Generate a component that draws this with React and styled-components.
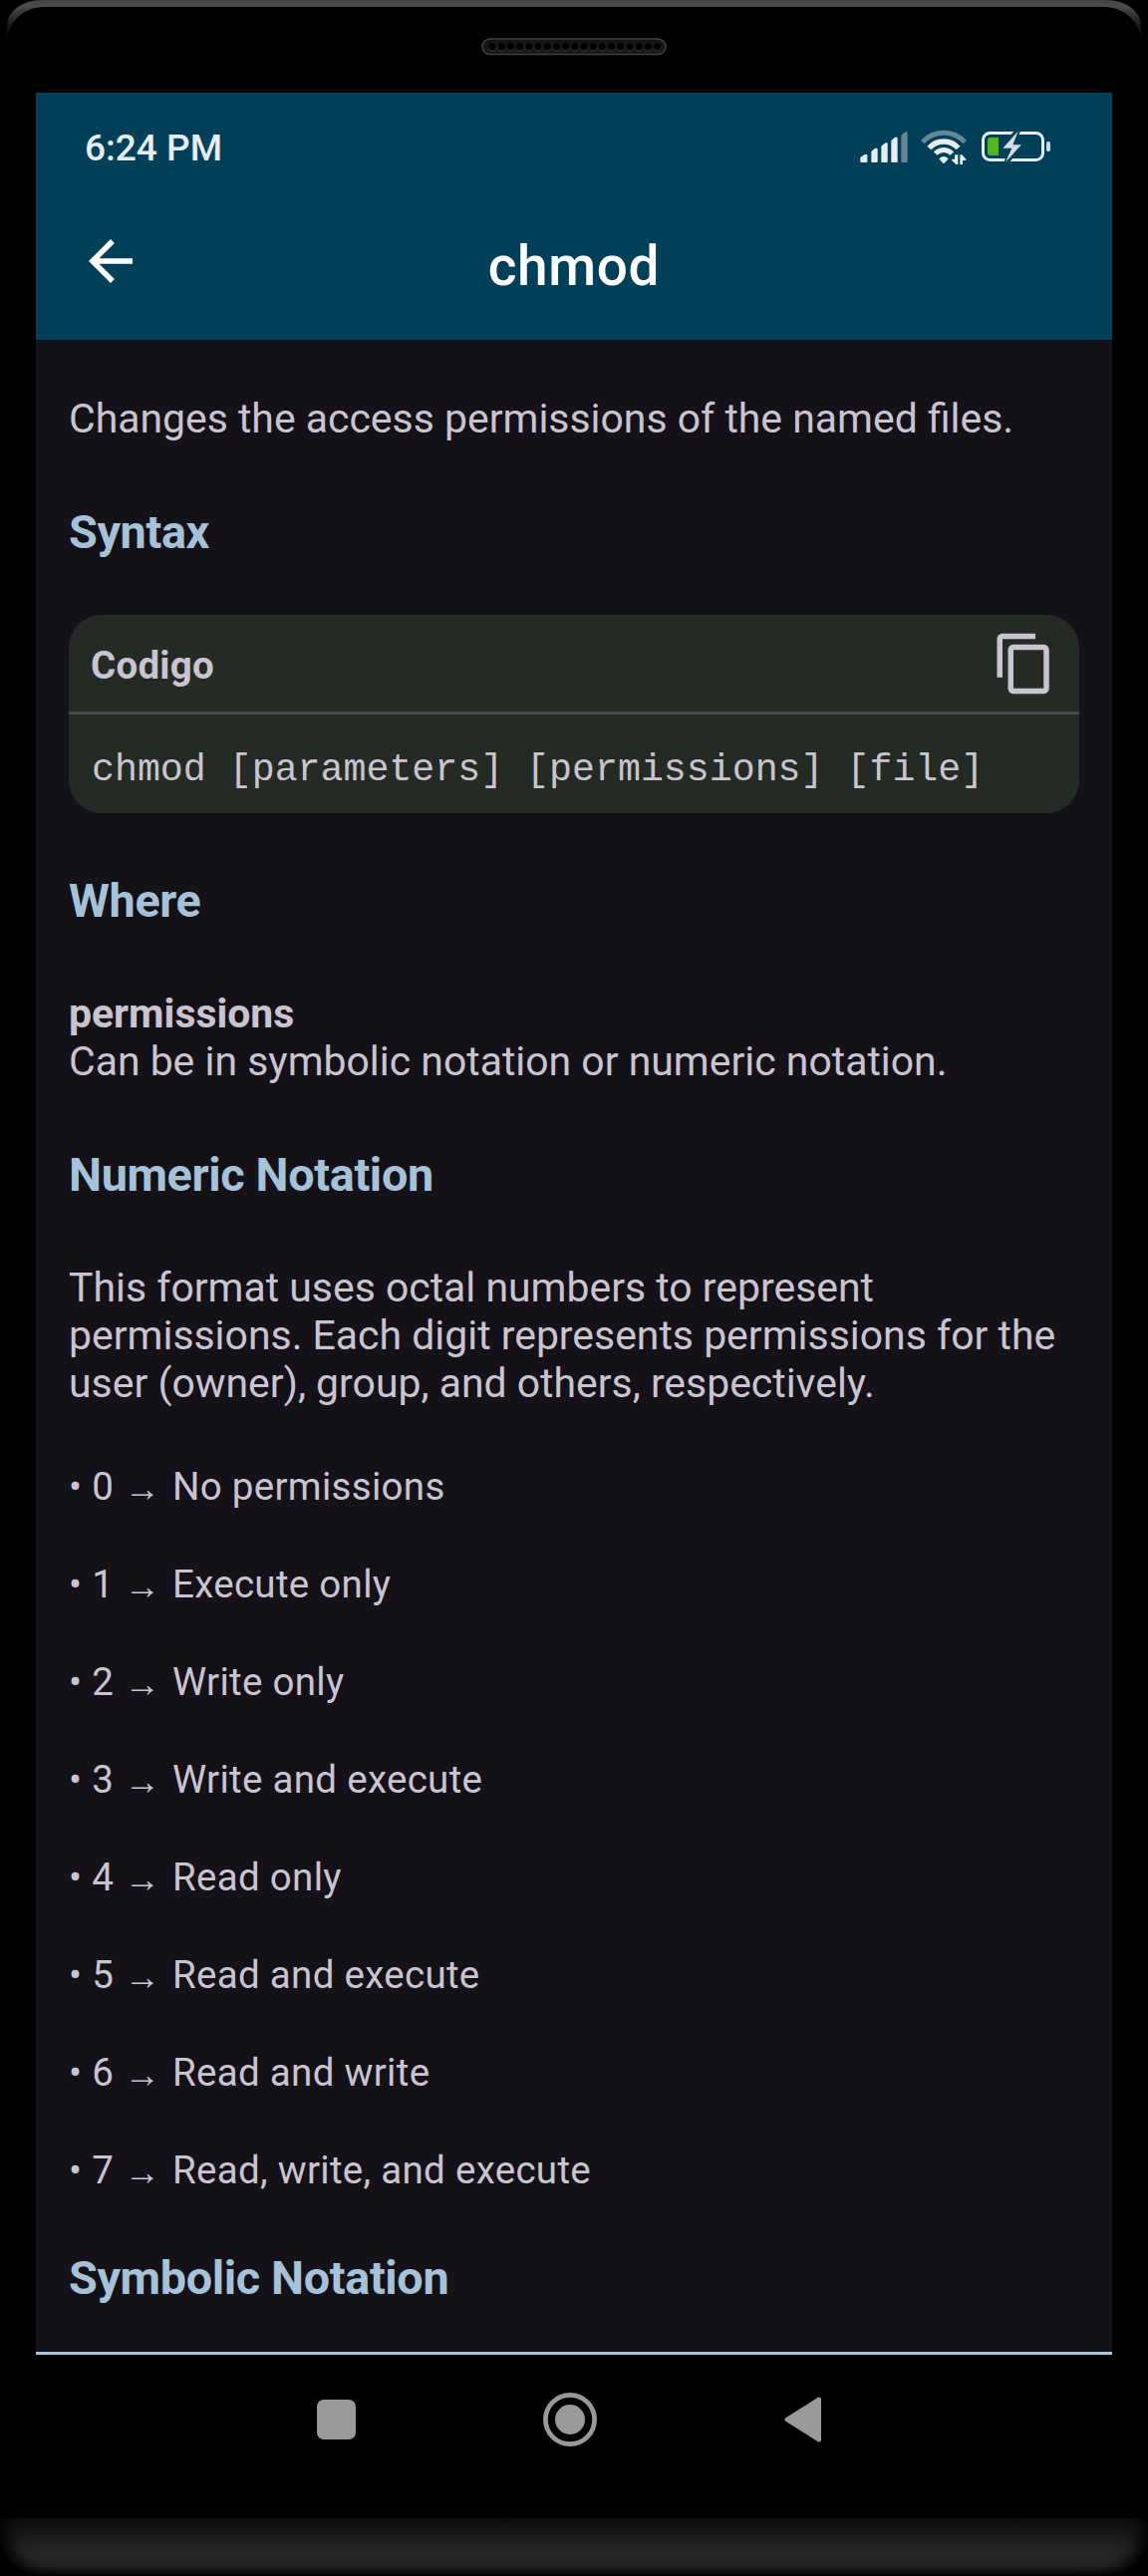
import React from "react";
import styled, { createGlobalStyle } from "styled-components";

const GlobalStyle = createGlobalStyle`
  * { box-sizing: border-box; }
  body {
    margin: 0;
    background: #000;
    font-family: Roboto, "Liberation Sans", sans-serif;
  }
  h1, h2, p, ul { margin: 0; padding: 0; font-weight: 400; }
  svg { display: block; }
`;

const Device = styled.div`
  width: 1152px;
  height: 2585px;
  background: #000;
  overflow: hidden;
  display: flex;
  flex-direction: column;
`;

const TopBezel = styled.div`
  height: 93px;
  margin: 0 7px;
  padding-top: 7px;
  flex: none;
  background: linear-gradient(#424242 0, #4c4c4c 6px, #3a3a3a 12px, #1c1c1c 24px, #000 42px);
  border-radius: 34px 34px 0 0 / 26px 26px 0 0;
`;

const TopGlass = styled.div`
  height: 86px;
  display: flex;
  justify-content: center;
  padding: 31px 0 0;
  background: #000;
  border-radius: 36px 36px 0 0;
`;

const BottomBezel = styled.div`
  height: 58px;
  flex: none;
  border-radius: 0 0 44px 44px;
  box-shadow: inset 14px -6px 16px -8px #000, inset -14px -6px 16px -8px #000;
  background: linear-gradient(#0d0d0d 0, #181818 17px, #262626 34px, #262626 48px, #181818 55px, #050505 58px);
`;

const Screen = styled.main`
  width: 1080px;
  height: 2434px;
  margin: 0 36px;
  flex: none;
  display: flex;
  flex-direction: column;
  background: #000;
`;

const Header = styled.header`
  height: 248px;
  flex: none;
  background: #024059;
  color: #fff;
`;

const StatusBar = styled.div`
  height: 114px;
  padding: 0 62px 4px 49px;
  display: flex;
  align-items: center;
  justify-content: space-between;
`;

const Clock = styled.span`
  font-size: 37px;
  font-weight: 500;
  line-height: 44px;
  padding-top: 1px;
  color: #e6ecf0;
`;

const Toolbar = styled.div`
  height: 134px;
  display: grid;
  grid-template-columns: 66px 1fr 66px;
  padding: 0 42px;
`;

const BackButton = styled.div`
  padding-top: 22px;
`;

const Title = styled.h1`
  font-size: 55px;
  font-weight: 500;
  line-height: 64px;
  letter-spacing: 0.6px;
  padding-top: 28px;
  text-align: center;
`;

const Body = styled.section`
  height: 2022px;
  flex: none;
  padding: 55px 33px 0;
  background: #141118;
  border-bottom: 3px solid #a5c4d9;
  color: #cac4d0;
`;

const Paragraph = styled.p`
  font-size: 40.93px;
  line-height: 48px;
  font-weight: ${(p) => (p.$strong ? 700 : 400)};
`;

const Heading = styled.h2`
  font-size: 46.75px;
  line-height: 54px;
  font-weight: 700;
  letter-spacing: -0.35px;
  color: #a5c2d8;
  margin: ${(p) => p.$before}px 0 ${(p) => p.$after}px;
`;

const CodeCard = styled.div`
  height: 199px;
  border-radius: 33px;
  background: #242b24;
`;

const CodeHeader = styled.div`
  height: 100px;
  padding: 0 22px;
  display: flex;
  align-items: center;
  justify-content: space-between;
  border-bottom: 3px solid #49454f;
`;

const CodeTitle = styled.span`
  font-size: 38.5px;
  line-height: 45px;
  font-weight: 700;
  letter-spacing: 0.25px;
  padding-top: 4px;
`;

const CodeText = styled.div`
  padding: 34px 23px 0;
  font-family: "Liberation Mono", monospace;
  font-size: 38.25px;
  line-height: 44px;
  white-space: pre;
`;

const List = styled.ul`
  list-style: none;
  margin-top: 57px;
  display: flex;
  flex-direction: column;
  gap: 53px;
`;

const Item = styled.li`
  height: 45px;
  font-size: 38.5px;
  line-height: 45px;
  letter-spacing: 0.3px;
  display: flex;
  white-space: pre;
`;

const Value = styled.span`
  width: 56px;
`;

const Arrow = styled.span`
  width: 48px;
  font-family: "Liberation Serif", serif;
  font-size: 36px;
  line-height: 50px;
`;

const NavBar = styled.nav`
  height: 130px;
  flex: none;
  display: flex;
  align-items: center;
  justify-content: space-between;
  padding: 0 292px 0 282px;
`;

function Speaker() {
  const holes = Array.from({ length: 19 }, (_, i) => 11 + i * 9.2);
  return (
    <svg width="186" height="18" viewBox="0 0 186 18">
      <rect x="1" y="1" width="184" height="15.5" rx="7.75" fill="#161616" stroke="#404040" strokeWidth="1.6" />
      {holes.map((x) => (
        <g key={x}>
          <circle cx={x} cy="9.7" r="3.7" fill="#444" />
          <circle cx={x} cy="8.9" r="3.6" fill="#000" />
        </g>
      ))}
    </svg>
  );
}

const arc = (r) => {
  const a = (48 * Math.PI) / 180;
  const dx = r * Math.sin(a);
  const y = 155 - r * Math.cos(a);
  return `M${291 - dx} ${y}A${r} ${r} 0 0 1 ${291 + dx} ${y}`;
};

function StatusIcons() {
  return (
    <svg width="194" height="40" viewBox="30 54 582 120">
      <g fill="#e6ecf0" stroke="#e6ecf0" strokeWidth="4" strokeLinejoin="round">
        <path d="M42 157V145L54 137H59V157Z" />
        <path d="M75 157V127L86 118H90V157Z" />
        <path d="M105 157V111L116 102H120V157Z" />
        <path d="M135 157V94L146 85H150V157Z" />
        <path d="M165 157V78L176 69H180V157Z" fill="#648899" stroke="#648899" />
      </g>
      <g fill="none" stroke="#e6ecf0">
        <path d={arc(85.5)} stroke="#648899" strokeWidth="15" />
        <path d={arc(59)} strokeWidth="16" />
        <path d={arc(33.5)} strokeWidth="15" />
      </g>
      <path d="M277 148Q284 141 291 141Q298 141 305 148L295 160Q291 164 287 160Z" fill="#e6ecf0" />
      <path d="M312 148H324V133H335V166H329L312 150ZM340 166V133H346L360 148V152H350V166Z" fill="#024059" stroke="#024059" strokeWidth="6" />
      <path d="M324 136H334V165H328L315 152V149H324ZM340 165V136H346L358 149V153H348V165Z" fill="#e6ecf0" />
      <rect x="409.5" y="70.5" width="180" height="81" rx="21" fill="none" stroke="#e6ecf0" strokeWidth="9" />
      <rect x="600" y="96" width="12" height="30" rx="5" fill="#cdd8de" />
      <path d="M431 84H456V138H431Q423 138 423 130V92Q423 84 431 84Z" fill="#50b81c" />
      <path d="M513 62L469 115H495L479 160L525 105H499L516 62Z" fill="#024059" stroke="#024059" strokeWidth="13" />
      <path d="M515 65L469 116H496L477 158L525 106H499Z" fill="#d3dde3" />
    </svg>
  );
}

function BackIcon() {
  return (
    <svg width="66" height="66" viewBox="0 0 24 24" fill="#fff">
      <path d="M20 11H7.83l5.59-5.59L12 4l-8 8 8 8 1.41-1.41L7.83 13H20v-2z" />
    </svg>
  );
}

function CopyIcon() {
  return (
    <svg width="66" height="66" viewBox="0 0 24 24" fill="#cac4d0">
      <path d="M16 1H4c-1.1 0-2 .9-2 2v14h2V3h12V1zm3 4H8c-1.1 0-2 .9-2 2v14c0 1.1.9 2 2 2h11c1.1 0 2-.9 2-2V7c0-1.1-.9-2-2-2zm0 16H8V7h11v14z" />
    </svg>
  );
}

const modes = [
  "No permissions",
  "Execute only",
  "Write only",
  "Write and execute",
  "Read only",
  "Read and execute",
  "Read and write",
  "Read, write, and execute",
];

export default function App() {
  return (
    <Device>
      <GlobalStyle />
      <TopBezel>
        <TopGlass>
          <Speaker />
        </TopGlass>
      </TopBezel>
      <Screen>
        <Header>
          <StatusBar>
            <Clock>6:24 PM</Clock>
            <StatusIcons />
          </StatusBar>
          <Toolbar>
            <BackButton>
              <BackIcon />
            </BackButton>
            <Title>chmod</Title>
          </Toolbar>
        </Header>
        <Body>
          <Paragraph>Changes the access permissions of the named files.</Paragraph>
          <Heading $before={63} $after={56}>Syntax</Heading>
          <CodeCard>
            <CodeHeader>
              <CodeTitle>Codigo</CodeTitle>
              <CopyIcon />
            </CodeHeader>
            <CodeText>chmod [parameters] [permissions] [file]</CodeText>
          </CodeCard>
          <Heading $before={61} $after={62}>Where</Heading>
          <Paragraph $strong>permissions</Paragraph>
          <Paragraph>Can be in symbolic notation or numeric notation.</Paragraph>
          <Heading $before={63} $after={62}>Numeric Notation</Heading>
          <Paragraph>
            This format uses octal numbers to represent permissions. Each digit represents
            permissions for the user (owner), group, and others, respectively.
          </Paragraph>
          <List>
            {modes.map((label, digit) => (
              <Item key={label}>
                <Value>• {digit}</Value>
                <Arrow>→</Arrow>
                <span>{label}</span>
              </Item>
            ))}
          </List>
          <Heading $before={59} $after={0}>Symbolic Notation</Heading>
        </Body>
        <NavBar>
          <svg width="39" height="40" viewBox="0 0 39 40">
            <rect width="39" height="40" rx="7" fill="#999" />
          </svg>
          <svg width="54" height="54" viewBox="0 0 54 54">
            <circle cx="27" cy="27" r="24.6" fill="none" stroke="#999" strokeWidth="4.8" />
            <circle cx="27" cy="27" r="15" fill="#999" />
          </svg>
          <svg width="37" height="46" viewBox="0 0 37 46">
            <path d="M2.5 23L35 2.5V43.5Z" fill="#999" stroke="#999" strokeWidth="4" strokeLinejoin="round" />
          </svg>
        </NavBar>
      </Screen>
      <BottomBezel />
    </Device>
  );
}
